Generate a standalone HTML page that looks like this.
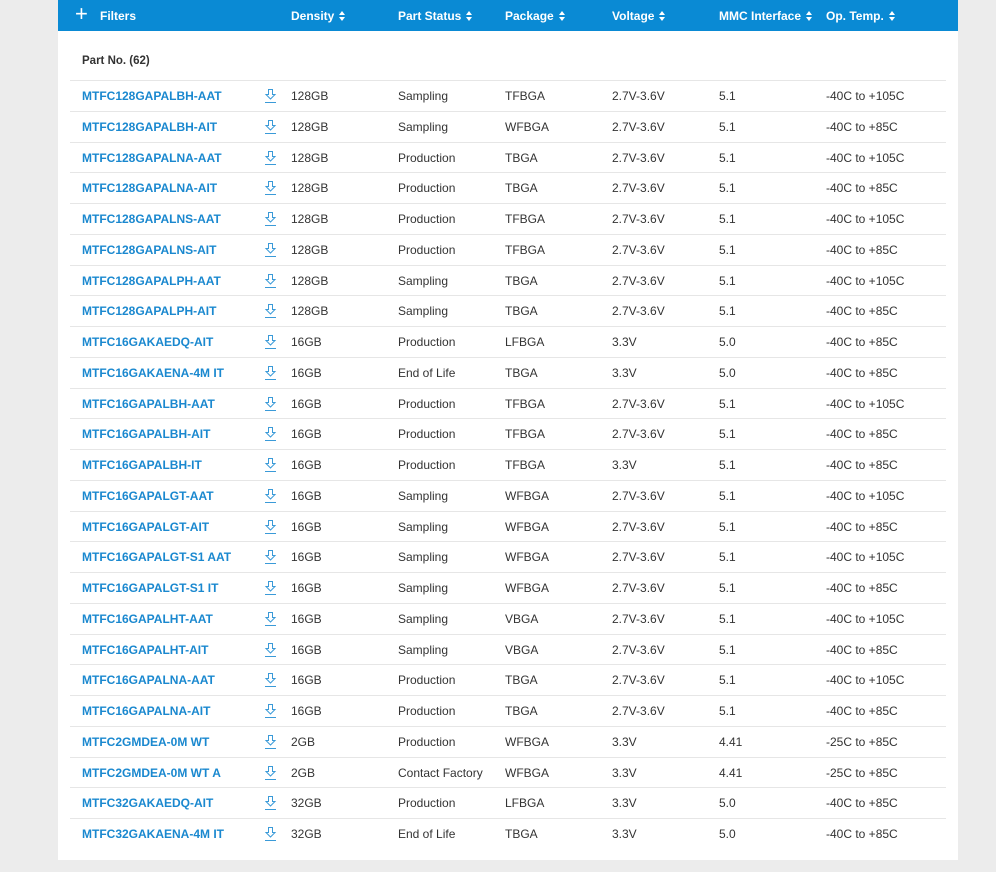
<!DOCTYPE html>
<html><head><meta charset="utf-8"><style>
*{margin:0;padding:0;box-sizing:border-box}
body{width:996px;height:872px;background:#ececec;font-family:"Liberation Sans",Arial,sans-serif;position:relative;overflow:hidden}
#panel{position:absolute;left:58px;top:0;width:900px;height:860px;background:#fff}
#hdr{position:absolute;left:58px;top:0;width:900px;height:31px;background:#0a8ad4;color:#fff;font-weight:bold;font-size:12px}
#hdr span{position:absolute;top:9px;white-space:nowrap}
.s{display:inline-block;width:7px;height:10px;vertical-align:-1px;margin-left:5px;position:relative}
.s:before{content:"";position:absolute;left:0;top:0;border-left:3.5px solid transparent;border-right:3.5px solid transparent;border-bottom:4px solid #fff}
.s:after{content:"";position:absolute;left:0;top:6px;border-left:3.5px solid transparent;border-right:3.5px solid transparent;border-top:4px solid #fff}
.t{position:absolute;font-size:12px;color:#333;white-space:nowrap}
.r{position:absolute;left:70px;width:876px;height:31px;border-top:1px solid #e6e6e6}
.r span{position:absolute;top:8px;font-size:12px;color:#333;white-space:nowrap}
.r .p{left:12px;color:#1a88cf;font-weight:bold}
.r svg{position:absolute;left:194px;top:7px}
</style></head><body>
<div id="panel"></div>
<div id="hdr">
<span style="left:17px;top:1px;font-size:22px;font-weight:normal">+</span>
<span style="left:42px">Filters</span>
<span style="left:233px">Density<i class="s"></i></span>
<span style="left:340px">Part Status<i class="s"></i></span>
<span style="left:447px">Package<i class="s"></i></span>
<span style="left:554px">Voltage<i class="s"></i></span>
<span style="left:661px">MMC Interface<i class="s"></i></span>
<span style="left:768px">Op. Temp.<i class="s"></i></span>
</div>
<div class="t" style="left:82px;top:55px;font-weight:bold;font-size:11.5px">Part No. (62)</div>
<div id="rows"></div>
<script>
var d=[
["MTFC128GAPALBH-AAT","128GB","Sampling","TFBGA","2.7V-3.6V","5.1","-40C to +105C"],
["MTFC128GAPALBH-AIT","128GB","Sampling","WFBGA","2.7V-3.6V","5.1","-40C to +85C"],
["MTFC128GAPALNA-AAT","128GB","Production","TBGA","2.7V-3.6V","5.1","-40C to +105C"],
["MTFC128GAPALNA-AIT","128GB","Production","TBGA","2.7V-3.6V","5.1","-40C to +85C"],
["MTFC128GAPALNS-AAT","128GB","Production","TFBGA","2.7V-3.6V","5.1","-40C to +105C"],
["MTFC128GAPALNS-AIT","128GB","Production","TFBGA","2.7V-3.6V","5.1","-40C to +85C"],
["MTFC128GAPALPH-AAT","128GB","Sampling","TBGA","2.7V-3.6V","5.1","-40C to +105C"],
["MTFC128GAPALPH-AIT","128GB","Sampling","TBGA","2.7V-3.6V","5.1","-40C to +85C"],
["MTFC16GAKAEDQ-AIT","16GB","Production","LFBGA","3.3V","5.0","-40C to +85C"],
["MTFC16GAKAENA-4M IT","16GB","End of Life","TBGA","3.3V","5.0","-40C to +85C"],
["MTFC16GAPALBH-AAT","16GB","Production","TFBGA","2.7V-3.6V","5.1","-40C to +105C"],
["MTFC16GAPALBH-AIT","16GB","Production","TFBGA","2.7V-3.6V","5.1","-40C to +85C"],
["MTFC16GAPALBH-IT","16GB","Production","TFBGA","3.3V","5.1","-40C to +85C"],
["MTFC16GAPALGT-AAT","16GB","Sampling","WFBGA","2.7V-3.6V","5.1","-40C to +105C"],
["MTFC16GAPALGT-AIT","16GB","Sampling","WFBGA","2.7V-3.6V","5.1","-40C to +85C"],
["MTFC16GAPALGT-S1 AAT","16GB","Sampling","WFBGA","2.7V-3.6V","5.1","-40C to +105C"],
["MTFC16GAPALGT-S1 IT","16GB","Sampling","WFBGA","2.7V-3.6V","5.1","-40C to +85C"],
["MTFC16GAPALHT-AAT","16GB","Sampling","VBGA","2.7V-3.6V","5.1","-40C to +105C"],
["MTFC16GAPALHT-AIT","16GB","Sampling","VBGA","2.7V-3.6V","5.1","-40C to +85C"],
["MTFC16GAPALNA-AAT","16GB","Production","TBGA","2.7V-3.6V","5.1","-40C to +105C"],
["MTFC16GAPALNA-AIT","16GB","Production","TBGA","2.7V-3.6V","5.1","-40C to +85C"],
["MTFC2GMDEA-0M WT","2GB","Production","WFBGA","3.3V","4.41","-25C to +85C"],
["MTFC2GMDEA-0M WT A","2GB","Contact Factory","WFBGA","3.3V","4.41","-25C to +85C"],
["MTFC32GAKAEDQ-AIT","32GB","Production","LFBGA","3.3V","5.0","-40C to +85C"],
["MTFC32GAKAENA-4M IT","32GB","End of Life","TBGA","3.3V","5.0","-40C to +85C"]];
var xs=[221,328,435,542,649,756],h="";
var ic='<svg width="13" height="16" viewBox="0 0 13 16" fill="none" stroke="#3a9ad8" stroke-width="1"><path d="M4.5 1.5h4v5h2.5l-4.5 4.5-4.5-4.5h2.5z"/><path d="M1 14.5h11"/></svg>';
d.forEach(function(r,i){var t=80+i*30.75;
h+='<div class="r" style="top:'+t+'px"><span class="p">'+r[0]+'</span>'+ic;
for(var j=1;j<7;j++)h+='<span style="left:'+xs[j-1]+'px">'+r[j]+'</span>';
h+='</div>';});
document.getElementById('rows').innerHTML=h;
</script>
</body></html>
